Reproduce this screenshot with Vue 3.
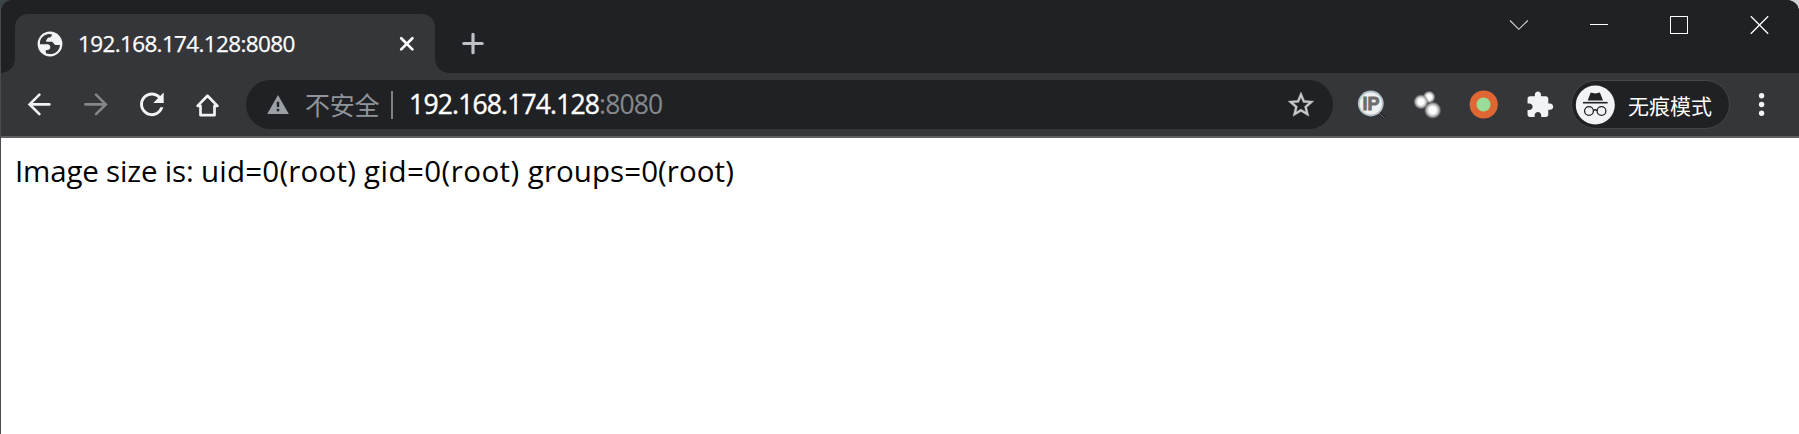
<script setup>
const tabTitle = '192.168.174.128:8080'
const host = '192.168.174.128'
const port = ':8080'
const output = [
  { kind: 'label', text: 'Image size is: ' },
  { kind: 'uid', text: 'uid=0(root) ' },
  { kind: 'gid', text: 'gid=0(root) ' },
  { kind: 'groups', text: 'groups=0(root)' },
]
</script>

<template>
  <div class="browser">
    <header class="titlebar">
      <div class="tab">
        <svg class="globe" width="26" height="26" viewBox="0 0 26 26">
          <circle cx="13" cy="13" r="12.4" fill="#f1f3f4" />
          <path d="M3 10.5C4 6 8 3.2 12 2.9L15.3 3.4C14 5.8 13.6 6.4 11.6 6.6C10 7 10.5 8.3 9.4 9C8.5 10 9.3 10.8 10.5 10.8H14.5C17 10.9 16.3 13.6 18.7 14H23C22.6 18.5 19.5 22.2 15 23C12.5 23.4 9.8 22.6 8.8 21.9V19.2C10 18.7 13.2 19.3 13.3 16.4C13.3 13.5 11.2 13.4 9.5 13.3H3Z" fill="#35363a" />
        </svg>
        <span class="tab-title">{{ tabTitle }}</span>
        <svg class="tab-close" width="16" height="16" viewBox="0 0 16 16">
          <path d="M2.2 2.2L13.4 13.4M13.4 2.2L2.2 13.4" stroke="#fff" stroke-width="2.7" stroke-linecap="round" />
        </svg>
      </div>
      <svg class="new-tab" width="24" height="24" viewBox="0 0 24 24">
        <path d="M12 3.3V21.7M2.8 12.5H21.2" stroke="#bdc1c6" stroke-width="3.2" stroke-linecap="round" />
      </svg>
      <div class="window-controls">
        <svg width="80" height="44" viewBox="0 0 80 44"><path d="M31 20.5L39.8 29.3L48.8 20.5" fill="none" stroke="#d5d5d6" stroke-width="1.1" /></svg>
        <svg width="80" height="44" viewBox="0 0 80 44"><path d="M31 24.5H49" stroke="#fff" /></svg>
        <svg width="80" height="44" viewBox="0 0 80 44"><rect x="31.5" y="16.5" width="17" height="17" fill="none" stroke="#fff" /></svg>
        <svg width="80" height="44" viewBox="0 0 80 44"><path d="M31.8 16.3L49.2 33.7M49.2 16.3L31.8 33.7" stroke="#fff" stroke-width="1.3" /></svg>
      </div>
    </header>

    <nav class="toolbar">
      <svg class="tool" viewBox="0 0 56 63">
        <path d="M38.4 31.4H19M28.4 21.6L18.6 31.4L28.4 41.2" fill="none" stroke="#f1f3f4" stroke-width="2.6" stroke-linecap="round" />
      </svg>
      <svg class="tool" viewBox="0 0 56 63">
        <path d="M18.4 31.4H38.6M29 21.6L38.8 31.4L29 41.2" fill="none" stroke="#85868a" stroke-width="2.6" stroke-linecap="round" />
      </svg>
      <svg class="tool" viewBox="0 0 56 63">
        <path transform="translate(11.1 13.6) scale(1.48)" d="M17.65 6.35C16.2 4.9 14.21 4 12 4c-4.42 0-7.99 3.58-7.99 8s3.57 8 7.99 8c3.73 0 6.84-2.55 7.73-6h-2.08c-.82 2.33-3.04 4-5.65 4-3.31 0-6-2.69-6-6s2.69-6 6-6c1.66 0 3.14.69 4.22 1.78L13 11h7V4l-2.35 2.35z" fill="#f1f3f4" />
      </svg>
      <svg class="tool" viewBox="0 0 56 63">
        <path d="M28.5 22.8L18.6 32.9H21.5V42.2H35.5V32.9H38.4Z" fill="none" stroke="#f1f3f4" stroke-width="2.7" stroke-linejoin="round" />
      </svg>

      <div class="omnibox">
        <svg class="warning" width="24" height="22" viewBox="0 0 24 22">
          <path d="M12 1L22.8 20H1.2Z" fill="#9aa0a6" />
          <path d="M12 7.8V13M12 14.8V17.3" stroke="#202124" stroke-width="2.4" />
        </svg>
        <span class="security">不安全</span>
        <span class="divider"></span>
        <span class="url">{{ host }}<span class="port">{{ port }}</span></span>
        <svg class="star" width="28" height="28" viewBox="0 0 28 28">
          <path transform="translate(-1.4 -1.6) scale(1.28)" d="M22 9.24l-7.19-.62L12 2 9.19 8.63 2 9.24l5.46 4.73L5.82 21 12 17.27 18.18 21l-1.63-7.03L22 9.24zM12 15.4l-3.76 2.27 1-4.28-3.32-2.88 4.38-.38L12 6.1l1.71 4.04 4.38.38-3.32 2.88 1 4.28L12 15.4z" fill="#c7c8ca" stroke="#c7c8ca" stroke-width="0.3" />
        </svg>
      </div>

      <svg class="tool" viewBox="0 0 56 63">
        <path d="M35.5 38.5L41.5 45" stroke="#202124" stroke-width="3" />
        <path d="M36 40L41.5 45" stroke="#77787b" stroke-width="1" />
        <circle cx="27.8" cy="30.5" r="12" fill="#eef0f2" stroke="#b3c0c7" stroke-width="1.8" />
        <text x="27.9" y="36.7" class="ip">IP</text>
      </svg>
      <svg class="tool" viewBox="0 0 56 63">
        <defs>
          <radialGradient id="glow">
            <stop offset="0.4" stop-color="#fff" />
            <stop offset="0.75" stop-color="#aaaaab" />
            <stop offset="1" stop-color="#707173" stop-opacity="0.2" />
          </radialGradient>
        </defs>
        <circle cx="30.1" cy="24.1" r="6.3" fill="url(#glow)" />
        <circle cx="22" cy="28.8" r="7.5" fill="url(#glow)" />
        <circle cx="33.7" cy="37.2" r="8.6" fill="url(#glow)" />
      </svg>
      <svg class="tool" viewBox="0 0 56 63">
        <circle cx="28.7" cy="31.5" r="14.1" fill="#e06733" />
        <circle cx="28.5" cy="31.5" r="7" fill="#99dd99" />
      </svg>
      <svg class="tool" viewBox="0 0 56 63">
        <path transform="translate(14.1 17.2) scale(1.22)" d="M20.5 11H19V7c0-1.1-.9-2-2-2h-4V3.5C13 2.12 11.88 1 10.5 1S8 2.12 8 3.5V5H4c-1.1 0-1.99.9-1.99 2v3.8H3.5c1.49 0 2.7 1.21 2.7 2.7s-1.21 2.7-2.7 2.7H2V20c0 1.1.9 2 2 2h3.8v-1.5c0-1.49 1.21-2.7 2.7-2.7s2.7 1.21 2.7 2.7V22H17c1.1 0 2-.9 2-2v-4h1.5c1.38 0 2.5-1.12 2.5-2.5S21.88 11 20.5 11z" fill="#f1f3f4" />
      </svg>

      <div class="incognito">
        <svg width="40" height="40" viewBox="0 0 40 40">
          <circle cx="20.3" cy="20" r="19.5" fill="#f1f3f4" />
          <path d="M15.7 7.5L20.3 8.5L24.9 7.5L28 15.5H12.7Z" fill="#202124" />
          <path d="M8 17.7H32.6" stroke="#202124" stroke-width="1.6" />
          <circle cx="14" cy="26" r="4.4" fill="none" stroke="#202124" stroke-width="1.3" />
          <circle cx="26.5" cy="26" r="4.4" fill="none" stroke="#202124" stroke-width="1.3" />
          <path d="M18.3 25.5Q20.25 24 22.2 25.5" fill="none" stroke="#202124" stroke-width="1.3" />
        </svg>
        <span>无痕模式</span>
      </div>
      <svg class="tool menu" viewBox="0 0 56 63">
        <g fill="#f1f3f4">
          <circle cx="27.6" cy="22.8" r="2.7" />
          <circle cx="27.6" cy="31.5" r="2.7" />
          <circle cx="27.6" cy="40.2" r="2.7" />
        </g>
      </svg>
    </nav>

    <main class="page">
      <span v-for="part in output" :key="part.kind" :class="part.kind">{{ part.text }}</span>
    </main>
  </div>
</template>

<style>
body {
  background: linear-gradient(90deg, #3a454a 50%, #d0d1d2 50%);
  overflow: hidden;
}
</style>

<style scoped>
.browser {
  display: flex;
  flex-direction: column;
  box-sizing: border-box;
  width: 1799px;
  height: 434px;
  border-left: 1px solid #4b4b4f;
  background: #35363a;
  border-top-left-radius: 12px;
  border-top-right-radius: 12px;
  overflow: hidden;
  font-family: "Open Sans", "Noto Sans", "Noto Sans CJK SC", sans-serif;
  white-space: nowrap;
}

.titlebar {
  display: flex;
  flex: none;
  height: 73px;
  background: #202124;
}

.tab {
  position: relative;
  display: flex;
  align-items: center;
  box-sizing: border-box;
  width: 420px;
  height: 59px;
  margin: 14px 0 0 14px;
  padding: 0 20px 0 22px;
  border-radius: 13px 13px 0 0;
  background: #35363a;
}

.tab::before,
.tab::after {
  content: "";
  position: absolute;
  bottom: 0;
  width: 14px;
  height: 14px;
}

.tab::before {
  right: 100%;
  background: radial-gradient(circle at 0 0, #202124 13.5px, #35363a 14.2px);
}

.tab::after {
  left: 100%;
  background: radial-gradient(circle at 100% 0, #202124 13.5px, #35363a 14.2px);
}

.globe {
  flex: none;
}

.tab-title {
  margin-left: 15px;
  font-size: 22.5px;
  letter-spacing: -0.64px;
  line-height: 30px;
  color: #fff;
  -webkit-text-stroke: 0.25px #fff;
}

.tab-close {
  margin-left: auto;
}

.new-tab {
  margin: 31px 0 0 26px;
}

.window-controls {
  display: flex;
  margin-left: auto;
}

.toolbar {
  display: flex;
  align-items: center;
  flex: none;
  box-sizing: border-box;
  height: 65px;
  padding: 0 9px 0 10px;
  border-bottom: 2px solid #5f5f63;
}

.tool {
  flex: none;
  width: 56px;
  height: 63px;
}

.omnibox {
  display: flex;
  align-items: center;
  box-sizing: border-box;
  width: 1087px;
  height: 49px;
  margin: 0 10px 0 11px;
  padding: 0 18px 0 20px;
  border-radius: 24.5px;
  background: #202124;
}

.security {
  margin-left: 15px;
  padding-bottom: 2px;
  font-family: "Noto Sans CJK SC", sans-serif;
  font-size: 25px;
  letter-spacing: -0.3px;
  line-height: 36px;
  color: #8f959b;
}

.divider {
  width: 2px;
  height: 28px;
  margin-left: 12px;
  background: #808386;
}

.url {
  margin-left: 16px;
  padding-bottom: 2px;
  font-size: 26.5px;
  letter-spacing: -0.85px;
  line-height: 36px;
  color: #fff;
  -webkit-text-stroke: 0.4px currentColor;
}

.port {
  color: #85888c;
  -webkit-text-stroke: 0.1px currentColor;
}

.star {
  margin-left: auto;
}

.ip {
  font-family: "Liberation Sans", Arial, sans-serif;
  font-size: 18px;
  font-weight: 700;
  text-anchor: middle;
  fill: #6d6d6d;
  stroke: #6d6d6d;
  stroke-width: 0.8px;
}

.incognito {
  display: flex;
  align-items: center;
  box-sizing: border-box;
  width: 159px;
  height: 49px;
  margin: 0 4px;
  padding-left: 3px;
  border: 1.5px solid #46474b;
  border-radius: 24.5px;
  background: #202124;
  font-family: "Noto Sans CJK SC", sans-serif;
  font-size: 21px;
  line-height: 32px;
  color: #fff;
}

.incognito span {
  margin-left: 13px;
  padding-top: 1px;
}

.page {
  flex: 1;
  padding: 12px 0 0 14px;
  background: #fff;
  font-size: 29.5px;
  line-height: 42px;
  white-space: pre;
  color: #000;
}

.label {
  letter-spacing: -0.18px;
}

.uid {
  letter-spacing: 0.22px;
}

.gid {
  letter-spacing: 0.45px;
}

.groups {
  letter-spacing: 0.06px;
}
</style>
